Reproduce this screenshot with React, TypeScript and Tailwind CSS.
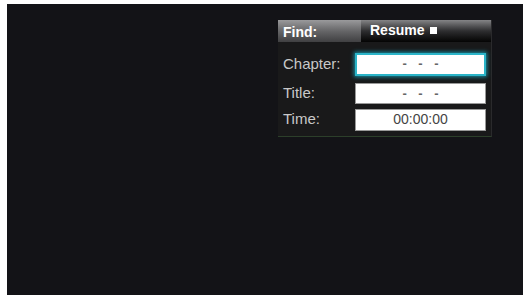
export default function App() {
  const font = { fontFamily: '"Liberation Sans", Arial, sans-serif' };
  return (
    <div className="w-[523px] h-[295px] bg-white pl-[7px] pt-[4px]" style={font}>
      <div className="w-full h-full bg-[#131317] pt-[16px] pl-[271px]">
        <div className="w-[214px] h-[117px] bg-[#19191a] border-b border-[#2c3f2a] border-r border-r-[#2a2a2c] flex flex-col">
          <div className="flex h-[22px]">
            <div className="w-[83px] bg-gradient-to-b from-[#9a9a9c] via-[#666668] to-[#404042] text-white font-bold text-[14px] pl-[5px] flex items-center pt-[2px]">
              Find:
            </div>
            <div className="flex-1 bg-gradient-to-b from-[#858587] via-[#2e2e30] to-[#050505] text-white font-bold text-[14px] pl-[9px] flex items-start gap-[6px]">
              <span className="leading-[18px] mt-[1px]">Resume</span>
              <span className="w-[7px] h-[7px] bg-white mt-[7px]"></span>
            </div>
          </div>
          <div className="flex flex-col pl-[5px] pr-[5px] pt-[10px]">
            <div className="flex items-center h-[24px]">
              <span className="w-[72px] text-[15px] text-[#c8c8c8]">Chapter:</span>
              <div className="w-[131px] h-[23px] bg-white border-[2px] border-[#2bb4c8] shadow-[0_0_4px_1px_#1a8fa3] flex items-center justify-center text-[13px] font-bold text-[#666] tracking-[4px] pl-[4px]">
                - - -
              </div>
            </div>
            <div className="flex items-center h-[23px] mt-[6px]">
              <span className="w-[72px] text-[15px] text-[#c8c8c8]">Title:</span>
              <div className="w-[131px] h-[21px] bg-white border border-[#999] flex items-center justify-center text-[13px] font-bold text-[#666] tracking-[4px] pl-[4px]">
                - - -
              </div>
            </div>
            <div className="flex items-center h-[23px] mt-[3px]">
              <span className="w-[72px] text-[15px] text-[#c8c8c8]">Time:</span>
              <div className="w-[131px] h-[22px] bg-white border border-[#999] flex items-center justify-center text-[14px] text-[#444]">
                00:00:00
              </div>
            </div>
          </div>
        </div>
      </div>
    </div>
  );
}
